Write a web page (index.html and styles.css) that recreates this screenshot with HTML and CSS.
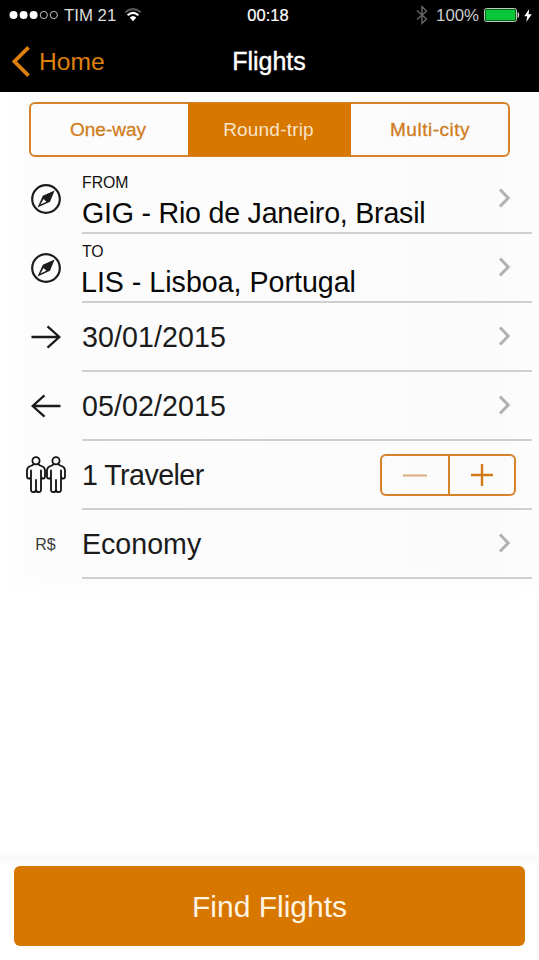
FILE: index.html
```html
<!DOCTYPE html>
<html lang="en">
<head>
<meta charset="utf-8">
<title>Flights</title>
<link rel="stylesheet" href="styles.css">
</head>
<body>
<svg class="defs" width="0" height="0">
  <symbol id="compass" viewBox="0 0 32 32">
    <circle cx="16" cy="16" r="13.8" fill="none" stroke="#1b1b1b" stroke-width="2.2"/>
    <path d="M24.6 7.6 L20 18.8 L7.6 24.4 L12.8 12.8 Z" fill="#1b1b1b"/>
    <path d="M13.6 16 L16.4 18.8 L10.4 21.6 Z" fill="#fcfcfc"/>
  </symbol>
  <symbol id="chevron" viewBox="0 0 14 20">
    <path d="M2 1.5 L10.2 10 L2 18.5" fill="none" stroke="#b1b1b3" stroke-width="3"/>
  </symbol>
  <symbol id="arrow" viewBox="0 0 32 24">
    <path d="M1.5 12 H29.3 M17.5 1.4 L29.3 12 L17.5 22.6" fill="none" stroke="#1b1b1b" stroke-width="2.3"/>
  </symbol>
  <symbol id="person" viewBox="0 0 20 38">
    <g fill="none" stroke="#111" stroke-width="1.8" stroke-linecap="round" stroke-linejoin="round">
      <circle cx="10" cy="4.8" r="3.6"/>
      <path d="M7.6 8.2 Q6.8 9.4 4.6 10 Q1.2 11 1 14.2 V20.5 Q1.1 22.6 2.9 22.6 Q4.7 22.6 5 20.5 V14.5 M5 22 V34 Q5.2 36.2 7.3 36.2 Q9.6 36.2 10 34 V24 M10 34 Q10.4 36.2 12.7 36.2 Q14.8 36.2 15 34 V14.5 M12.4 8.2 Q13.2 9.4 15.4 10 Q18.8 11 19 14.2 V20.5 Q18.9 22.6 17.1 22.6 Q15.3 22.6 15 20.5"/>
    </g>
  </symbol>
</svg>
<header class="top">
  <div class="status">
    <div class="carrier">
      <svg class="signal" width="50" height="10" viewBox="0 0 50 10">
        <g fill="#fff"><circle cx="4.5" cy="5" r="4"/><circle cx="14.6" cy="5" r="4"/><circle cx="24.6" cy="5" r="4"/></g>
        <g fill="none" stroke="#c4c4c4"><circle cx="34.8" cy="5" r="3.6"/><circle cx="44.8" cy="5" r="3.6"/></g>
      </svg>
      <span class="network">TIM 21</span>
      <svg width="18" height="14" viewBox="0 0 18 14">
        <path d="M1.2 4.3 Q9 -2 16.8 4.3" fill="none" stroke="#555" stroke-width="2"/>
        <path d="M3.6 7.3 Q9 2.3 14.4 7.3" fill="none" stroke="#fff" stroke-width="2.1"/>
        <path d="M5.7 9.6 Q9 6.6 12.3 9.6 L9 13.2 Z" fill="#fff"/>
      </svg>
    </div>
    <time class="clock">00:18</time>
    <div class="power">
      <svg width="12" height="20" viewBox="0 0 12 20"><path d="M1 5.5 L10.5 14 L6 18.3 V1.7 L10.5 6 L1 14.5" fill="none" stroke="#666" stroke-width="1.4"/></svg>
      <span class="percent">100%</span>
      <svg class="battery" width="36" height="14" viewBox="0 0 36 14">
        <rect x=".5" y=".5" width="32" height="13" rx="1.8" fill="none" stroke="#b9cdb9"/>
        <rect x="1.5" y="1.5" width="30" height="11" rx=".8" fill="#08c637"/>
        <path d="M34 4.5 Q35.6 7 34 9.5 Z" fill="#fff" stroke="#fff" stroke-width=".6"/>
      </svg>
      <svg class="bolt" width="8" height="13" viewBox="0 0 8 13"><path d="M5.2 0 L.2 7.2 H3.2 L2.3 13 L7.8 5.3 H4.6 Z" fill="#fff"/></svg>
    </div>
  </div>
  <nav class="navbar">
    <a class="back"><svg width="18" height="31" viewBox="0 0 18 31"><path d="M16.5 1.4 L2.4 15.5 L16.5 29.6" fill="none" stroke="#df800d" stroke-width="3.7"/></svg><span>Home</span></a>
    <h1 class="title">Flights</h1>
  </nav>
</header>
<main class="form">
  <div class="segments">
    <button class="segment one-way">One-way</button>
    <button class="segment selected">Round-trip</button>
    <button class="segment multi">Multi-city</button>
  </div>
  <ul class="rows">
    <li class="row">
      <div class="icon"><svg width="32" height="32"><use href="#compass"/></svg></div>
      <div class="field place"><div class="text"><span class="label">FROM</span><span class="value from">GIG - Rio de Janeiro, Brasil</span></div><svg class="chevron" width="14" height="20"><use href="#chevron"/></svg></div>
    </li>
    <li class="row">
      <div class="icon"><svg width="32" height="32"><use href="#compass"/></svg></div>
      <div class="field place"><div class="text"><span class="label">TO</span><span class="value to">LIS - Lisboa, Portugal</span></div><svg class="chevron" width="14" height="20"><use href="#chevron"/></svg></div>
    </li>
    <li class="row">
      <div class="icon"><svg width="32" height="24"><use href="#arrow"/></svg></div>
      <div class="field"><span class="value date">30/01/2015</span><svg class="chevron" width="14" height="20"><use href="#chevron"/></svg></div>
    </li>
    <li class="row">
      <div class="icon"><svg class="flip" width="32" height="24"><use href="#arrow"/></svg></div>
      <div class="field"><span class="value date">05/02/2015</span><svg class="chevron" width="14" height="20"><use href="#chevron"/></svg></div>
    </li>
    <li class="row">
      <div class="icon"><svg width="20" height="38"><use href="#person"/></svg><svg width="20" height="38"><use href="#person"/></svg></div>
      <div class="field"><span class="value traveler">1 Traveler</span>
        <div class="stepper">
          <button class="step minus"><svg width="24" height="24" viewBox="0 0 24 24"><path d="M0 12.5 H24" stroke="#deb285" stroke-width="2.2"/></svg></button>
          <button class="step"><svg width="24" height="24" viewBox="0 0 24 24"><path d="M1 12 H23 M12 1 V23" stroke="#d27a18" stroke-width="2.4"/></svg></button>
        </div>
      </div>
    </li>
    <li class="row">
      <div class="icon currency">R$</div>
      <div class="field"><span class="value">Economy</span><svg class="chevron" width="14" height="20"><use href="#chevron"/></svg></div>
    </li>
  </ul>
</main>
<footer class="footer"><button class="find">Find Flights</button></footer>
</body>
</html>
```

FILE: styles.css
```css
* { box-sizing: border-box; }

body {
  margin: 0;
  height: 960px;
  display: flex;
  flex-direction: column;
  overflow: hidden;
  background: #fff;
  color: #1b1b1b;
  font-family: "Liberation Sans", Arial, sans-serif;
}

.defs { display: none; }
svg { display: block; flex: none; }
button { font-family: inherit; border: 0; margin: 0; padding: 0; background: none; }

.top {
  height: 92px;
  flex: none;
  background: #000;
  color: #fff;
}

.status {
  height: 30px;
  display: grid;
  grid-template-columns: 1fr auto 1fr;
  align-items: center;
  padding: 0 7px 0 9px;
}

.carrier, .power { display: flex; align-items: center; }
.power { justify-content: flex-end; }
.network { margin: 0 8px 0 5px; padding-top: 1px; font-size: 16.8px; color: #ddd; }
.clock { padding-right: 5px; font-size: 16.5px; -webkit-text-stroke: 0.2px #fff; }
.percent { margin: 0 5px 0 8px; padding-top: 1px; font-size: 16.8px; color: #ccc; }
.bolt { margin-left: 4px; }

.navbar {
  height: 62px;
  display: grid;
  grid-template-columns: 1fr auto 1fr;
  align-items: center;
  padding: 0 12px;
}

.back {
  display: flex;
  align-items: center;
  gap: 9px;
  color: #df800d;
  font-size: 24.6px;
}
.back span { padding-top: 1px; }

.title { margin: 0 1px 0 0; font-size: 25px; font-weight: 400; -webkit-text-stroke: 0.4px #fff; }

.form {
  flex: none;
  padding-top: 10px;
  height: 506px;
  background:
    linear-gradient(transparent 480px, #fff),
    linear-gradient(90deg, #fff 0, #fcfcfc 40px, #fbfbfb 500px, #fdfdfd);
}

.segments {
  height: 55px;
  margin: 0 29px;
  display: grid;
  grid-template-columns: 157px 163px 1fr;
  border: 2px solid #d58228;
  border-radius: 6px;
}

.segment {
  color: #cf7c1e;
  font-size: 19px;
  -webkit-text-stroke: 0.3px #cf7c1e;
}
.segment.one-way { padding-right: 3px; }
.segment.selected {
  margin: -1px 0;
  padding-right: 2px;
  background: #d77700;
  color: #f9e3c8;
  letter-spacing: 0.2px;
  -webkit-text-stroke: 0;
}
.segment.multi { padding-left: 1px; letter-spacing: 0.5px; }

.rows { list-style: none; margin: 8px 0 0; padding: 0; }
.row { height: 69px; display: grid; grid-template-columns: 82px 1fr; }
.icon {
  display: flex;
  align-items: center;
  justify-content: center;
  padding: 0 0 2px 9px;
}
.currency { padding-bottom: 0; font-size: 16px; color: #3c3c3c; }
.flip { transform: scaleX(-1); }

.field {
  display: flex;
  align-items: center;
  justify-content: space-between;
  margin-right: 7px;
  padding-right: 20px;
  border-bottom: 2px solid #cfcfcf;
}
.chevron { margin-bottom: 2px; }
.text { align-self: stretch; display: flex; flex-direction: column; padding-top: 9px; }
.label { font-size: 15.8px; line-height: 18px; color: #111; }
.value { padding-top: 1px; font-size: 28.6px; line-height: 34px; white-space: nowrap; }
.place .value { margin-top: 4px; padding-top: 0; color: #080808; }
.value.from { letter-spacing: -0.22px; }
.value.to { margin-left: -1px; }
.value.date { letter-spacing: 0.1px; }
.value.traveler { letter-spacing: -0.55px; }

.stepper {
  width: 136px;
  height: 42px;
  margin-right: -4px;
  display: grid;
  grid-template-columns: 68px 1fr;
  border: 2px solid #d58228;
  border-radius: 6px;
}
.step { display: flex; align-items: center; justify-content: center; }
.minus { border-right: 2px solid #d58228; }

.footer {
  margin-top: auto;
  padding: 14px;
  background: linear-gradient(#fff, #f9f9f9 6px, #fff 14px);
}
.find {
  width: 100%;
  height: 80px;
  display: block;
  padding-top: 2px;
  border-radius: 6px;
  background: #d77700;
  color: #fff3e2;
  font-size: 30px;
}
```
